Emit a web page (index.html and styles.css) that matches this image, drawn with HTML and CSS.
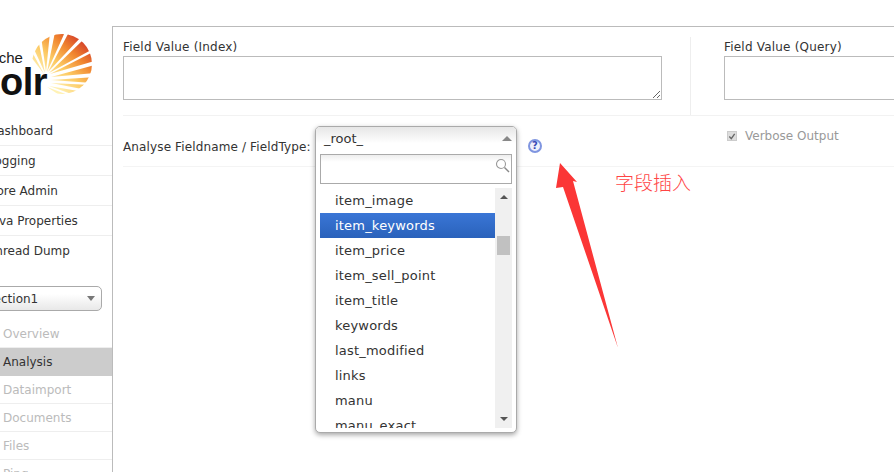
FILE: index.html
```html
<!DOCTYPE html>
<html lang="en">
<head>
  <meta charset="UTF-8" />
  <title>Solr Admin</title>
  <link rel="stylesheet" href="styles.css">
</head>
<body>
  <div class="page">
    <div class="sidebar">
      <div class="logo">
        <div class="logo-text">
          <span class="apache">Apache</span>
          <span class="solr">Solr</span>
        </div>
        <svg class="sun" width="62" height="62" viewBox="0 0 62 62">
          <defs>
            <linearGradient id="rays" gradientUnits="userSpaceOnUse" x1="10" y1="55" x2="55" y2="5">
              <stop offset="0.15" stop-color="#fff2b5"/>
              <stop offset="0.45" stop-color="#fcc962"/>
              <stop offset="0.72" stop-color="#f0842f"/>
              <stop offset="1" stop-color="#cf3328"/>
            </linearGradient>
            <clipPath id="disc"><circle cx="31" cy="30" r="30"/></clipPath>
          </defs>
          <g clip-path="url(#disc)" fill="url(#rays)">
            <polygon points="13,40 0,23 1,18"/>
            <polygon points="14,39 2,13 7,5"/>
            <polygon points="15,38 10,2 19,-2"/>
            <polygon points="16,38 24,-2 34,-2"/>
            <polygon points="17,38 38,-2 50,3"/>
            <polygon points="18,39 53,5 62,15"/>
            <polygon points="19,40 62,18 64,27"/>
            <polygon points="20,43 64,31 64,39"/>
            <polygon points="20,46 64,43 62,49"/>
            <polygon points="20,49 60,51 56,56"/>
            <polygon points="18,52 53,58 46,62"/>
            <polygon points="16,53 40,62 33,64"/>
          </g>
        </svg>
      </div>
      <ul class="main-nav">
        <li>Dashboard</li>
        <li>Logging</li>
        <li>Core Admin</li>
        <li>Java Properties</li>
        <li>Thread Dump</li>
      </ul>
      <div class="core-select">
        <span>collection1</span>
        <i class="caret"></i>
      </div>
      <ul class="core-nav">
        <li>Overview</li>
        <li class="active">Analysis</li>
        <li>Dataimport</li>
        <li>Documents</li>
        <li>Files</li>
        <li>Ping</li>
      </ul>
    </div>

    <div class="content">
      <div class="values">
        <div class="value-col index-col">
          <label>Field Value (Index)</label>
          <textarea class="index-box"></textarea>
        </div>
        <div class="value-col query-col">
          <label>Field Value (Query)</label>
          <div class="query-box"></div>
        </div>
      </div>
      <div class="settings">
        <label class="field-label">Analyse Fieldname / FieldType:</label>
        <div class="select-holder"></div>
        <span class="help">?</span>
        <div class="verbose">
          <span class="checkbox">
            <svg width="9" height="9" viewBox="0 0 9 9"><path d="M1.5 4.5 L3.7 7 L7.5 1.5" fill="none" stroke="#666" stroke-width="1.5"/></svg>
          </span>
          Verbose Output
        </div>
      </div>
    </div>

    <div class="dropdown">
      <div class="dropdown-head">
        <span>_root_</span>
        <i class="arrow-up"></i>
      </div>
      <div class="search">
        <svg width="16" height="16" viewBox="0 0 16 16"><circle cx="6" cy="6" r="4.5" fill="none" stroke="#999" stroke-width="1.1"/><path d="M9.5 9.5 L14 14" stroke="#888" stroke-width="1.4"/></svg>
      </div>
      <div class="list-wrap">
        <ul class="options">
          <li>item_image</li>
          <li class="selected">item_keywords</li>
          <li>item_price</li>
          <li>item_sell_point</li>
          <li>item_title</li>
          <li>keywords</li>
          <li>last_modified</li>
          <li>links</li>
          <li>manu</li>
          <li>manu_exact</li>
        </ul>
        <div class="scrollbar">
          <i class="arrow-up small"></i>
          <div class="thumb"></div>
          <i class="arrow-down small"></i>
        </div>
      </div>
    </div>

    <svg class="red-arrow" width="70" height="190" viewBox="0 0 70 190">
      <polygon points="5,0 22,19 18,18 63,185 8,24 1,25" fill="#fb3636"/>
    </svg>
    <div class="note">字段插入</div>
  </div>
</body>
</html>
```
FILE: styles.css
```css
* {
  box-sizing: border-box;
}

html, body {
  margin: 0;
  padding: 0;
  height: 100%;
  overflow: hidden;
  background-color: #fff;
}

body {
  font-family: "DejaVu Sans", Verdana, sans-serif;
  font-size: 12px;
  color: #333;
}

ul {
  list-style: none;
  margin: 0;
  padding: 0;
}

.page {
  position: relative;
  display: flex;
  width: 894px;
  height: 472px;
  overflow: hidden;
  padding-top: 26px;
}

/* sidebar, cut off at the window's left edge */
.sidebar {
  width: 112px;
  flex: none;
  overflow: hidden;
}

.logo {
  display: flex;
  height: 90px;
  padding-top: 8px;
  margin-left: -28px;
}

.logo-text {
  width: 60px;
  padding-top: 16px;
  flex: none;
  text-align: right;
  color: #1a1a1a;
}

.apache {
  display: block;
  font-family: "Liberation Sans", Arial, sans-serif;
  font-size: 15px;
  line-height: 16px;
  margin-right: 16px;
  margin-bottom: 1px;
  white-space: nowrap;
}

.solr {
  display: block;
  font-family: "Liberation Sans", Arial, sans-serif;
  font-weight: bold;
  font-size: 38px;
  line-height: 30px;
  margin-right: -15px;
  letter-spacing: -0.5px;
  color: #111;
}

.sun {
  flex: none;
  margin-left: -1px;
}

.main-nav li {
  height: 30px;
  line-height: 30px;
  text-indent: -12px;
  border-bottom: 1px solid #eee;
  white-space: nowrap;
}

.main-nav li:last-child {
  border-bottom: 0;
}

.core-select {
  display: flex;
  align-items: center;
  justify-content: space-between;
  height: 25px;
  width: 130px;
  margin: 20px 0 0 -28px;
  padding-right: 6px;
  border: 1px solid #aaa;
  border-radius: 5px;
  background: linear-gradient(#fff 30%, #e8e8e8);
}

.caret {
  width: 0;
  height: 0;
  border-left: 4px solid transparent;
  border-right: 4px solid transparent;
  border-top: 5px solid #777;
}

.core-nav {
  margin-top: 9px;
}

.core-nav li {
  height: 28px;
  line-height: 28px;
  padding-left: 3px;
  color: #bbb;
  border-bottom: 1px solid #eee;
}

.core-nav li.active {
  background-color: #ccc;
  color: #333;
  border-bottom: 0;
}

/* main panel */
.content {
  flex: 1;
  border-left: 1px solid #bbb;
  border-top: 1px solid #bbb;
  padding-left: 10px;
}

.values {
  display: flex;
  height: 89px;
  border-bottom: 1px solid #f2f2f2;
}

.value-col label {
  display: block;
  padding-top: 13px;
  height: 29px;
  line-height: 15px;
  letter-spacing: 0.2px;
}

.index-col {
  width: 568px;
  border-right: 1px solid #eee;
  margin-top: 10px;
}

.index-col label {
  margin-top: -10px;
}

.index-box {
  display: block;
  width: 539px;
  height: 44px;
  margin: 0;
  border: 1px solid #bbb;
  border-radius: 0;
  padding: 0;
  outline: 0;
}

.query-col {
  padding-left: 33px;
  flex: 1;
  overflow: hidden;
}

.query-box {
  width: 300px;
  height: 44px;
  border: 1px solid #bbb;
}

.settings {
  display: flex;
  height: 51px;
  border-bottom: 1px solid #f4f4f4;
  padding-top: 23px;
}

.field-label {
  width: 192px;
  flex: none;
  line-height: 16px;
  letter-spacing: 0.13px;
  white-space: nowrap;
}

.select-holder {
  width: 213px;
  flex: none;
}

.help {
  width: 14px;
  height: 14px;
  flex: none;
  border-radius: 50%;
  border: 2px solid #7f95e0;
  background-color: #eef0fb;
  color: #3a4bb5;
  font-size: 10px;
  font-weight: bold;
  line-height: 10px;
  text-align: center;
}

.verbose {
  display: flex;
  align-items: center;
  gap: 8px;
  height: 16px;
  margin: -11px 0 0 185px;
  color: #999;
  white-space: nowrap;
}

.checkbox {
  display: flex;
  width: 10px;
  height: 10px;
  align-items: center;
  justify-content: center;
  background-color: #ddd;
  border: 1px solid #ccc;
}

/* open field type menu */
.dropdown {
  position: absolute;
  left: 315px;
  top: 126px;
  width: 202px;
  height: 307px;
  background-color: #fff;
  border: 1px solid #aaa;
  border-radius: 5px;
  box-shadow: 0 2px 5px rgba(0, 0, 0, 0.35);
  overflow: hidden;
}

.dropdown-head {
  display: flex;
  align-items: center;
  justify-content: space-between;
  height: 27px;
  padding: 0 4px 4px 8px;
  font-size: 13px;
  background: linear-gradient(#e6e6e6, #fff 60%);
}

.arrow-up, .arrow-down {
  width: 0;
  height: 0;
  border-left: 5px solid transparent;
  border-right: 5px solid transparent;
}

.arrow-up {
  border-bottom: 5px solid #888;
}

.arrow-down {
  border-top: 5px solid #555;
}

.arrow-up.small {
  border-bottom-color: #555;
  border-left-width: 4px;
  border-right-width: 4px;
  border-bottom-width: 4px;
}

.arrow-down.small {
  border-left-width: 4px;
  border-right-width: 4px;
  border-top-width: 4px;
}

.search {
  display: flex;
  justify-content: flex-end;
  height: 30px;
  margin: 0 4px;
  padding-top: 3px;
  border: 1px solid #aaa;
  background: linear-gradient(#eee, #fff 25%);
}

.list-wrap {
  display: flex;
  height: 240px;
  margin: 4px 4px 0;
  overflow: hidden;
}

.options {
  flex: 1;
  font-size: 13px;
  letter-spacing: 0.2px;
}

.options li {
  height: 25px;
  line-height: 26px;
  padding-left: 15px;
}

.options li.selected {
  color: #fff;
  background: linear-gradient(#3a76d6, #2a62bb);
}

.scrollbar {
  display: flex;
  flex-direction: column;
  align-items: center;
  width: 17px;
  padding: 7px 0;
  background-color: #f0f0f0;
}

.thumb {
  width: 13px;
  height: 19px;
  margin-top: 37px;
  margin-bottom: auto;
  background-color: #c1c1c1;
}

.red-arrow {
  position: absolute;
  left: 555px;
  top: 163px;
}

.note {
  position: absolute;
  left: 615px;
  top: 170px;
  font-family: "Noto Sans CJK SC", sans-serif;
  font-size: 19px;
  font-weight: 300;
  line-height: 24px;
  color: #f44;
}
```
